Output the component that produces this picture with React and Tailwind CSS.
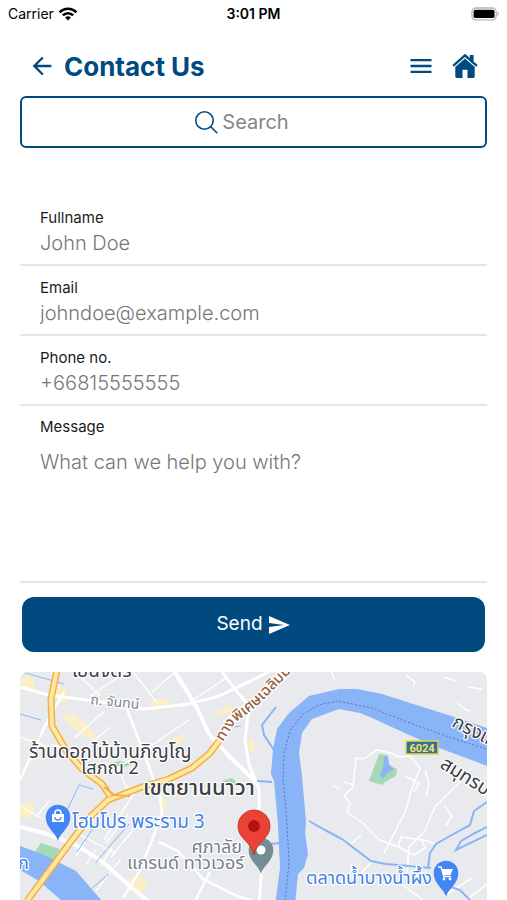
import { MdArrowBack, MdMenu, MdSend } from 'react-icons/md'

const fields = [
  { id: 'fullname', label: 'Fullname', type: 'text', placeholder: 'John Doe' },
  { id: 'email', label: 'Email', type: 'email', placeholder: 'johndoe@example.com' },
  { id: 'phone', label: 'Phone no.', type: 'tel', placeholder: '+66815555555' },
]

function StatusBar() {
  return (
    <div className="grid h-7 grid-cols-3 items-center px-2 text-black">
      <div className="flex items-center gap-1 text-sm">
        <span>Carrier</span>
        <svg className="h-4 w-5" viewBox="0 0 20 16" fill="none" stroke="currentColor" strokeWidth="2.6">
          <path d="M1.6 6.2a12 12 0 0 1 16.8 0" />
          <path d="M4.8 9.4a7.4 7.4 0 0 1 10.4 0" />
          <path d="M10 14.6l-2.9-3a4.2 4.2 0 0 1 5.8 0z" fill="currentColor" stroke="none" />
        </svg>
      </div>
      <span className="text-center text-sm font-semibold">3:01 PM</span>
      <svg className="h-4 w-7 justify-self-end" viewBox="0 1 30 14">
        <rect x="1" y="1.600" width="26" height="12.600" rx="4" fill="#fff" stroke="#b5b5b5" strokeWidth="1.4" />
        <rect x="2.800" y="3.400" width="22.400" height="9" rx="2" fill="#000" />
        <path d="M28.400 5.600c2 .7 2 3.900 0 4.600z" fill="#b5b5b5" />
      </svg>
    </div>
  )
}

function Header() {
  return (
    <header className="flex h-16 items-center px-7 text-[#004a80]">
      <button type="button" aria-label="Back">
        <MdArrowBack className="size-7" />
      </button>
      <h1 className="ml-2 grow text-[26px] font-bold">Contact Us</h1>
      <button type="button" aria-label="Menu">
        <MdMenu className="size-7" />
      </button>
      <button type="button" aria-label="Home" className="ml-4">
        <svg className="size-7" viewBox="0 0 28 28" fill="currentColor">
          <path d="M14 1.800 1.400 13.100l1.500 1.700L14 4.900l11.100 9.900 1.500-1.700-4-3.600V3.100h-3.800v3z" />
          <path d="M14 6.500 4.300 15.100v9.500c0 .9.5 1.400 1.400 1.400h5.800v-8.200h5V26h5.800c.9 0 1.400-.5 1.400-1.400v-9.500z" />
        </svg>
      </button>
    </header>
  )
}

function Pin({ x, y, color, children }) {
  return (
    <g transform={`translate(${x} ${y})`}>
      <path d="M0 24C-1.500 16-12.300 11.500-12.300 0a12.300 12.300 0 0 1 24.600 0C12.300 11.500 1.500 16 0 24z" fill={color} />
      {children}
    </g>
  )
}

function Map() {
  return (
    <svg
      className="block h-[229px] w-full rounded-t-lg bg-[#e8eaed]"
      viewBox="0 0 467 229"
      preserveAspectRatio="xMidYMid slice"
      role="img"
      aria-label="Map"
    >
      {/* blocks */}
      <g fill="#fbefc5">
        <path d="M0 9l9-9 6 12-2 8-10-6z" />
        <path d="M37 12l9 5 3 12-10 1-4-10z" />
        <path d="M41 43l11-2 14 10 14 18-13-4-14-9z" />
        <path d="M131 29l18-4-2 9-15 6z" />
        <path d="M193 42l17-9 4 5-17 7z" />
        <path d="M149 68l16-6-2 8-12 5z" />
        <path d="M228 67l5-1 2 13-5 1z" />
        <path d="M0 133l13-3 2 10-8 7-7-3z" />
        <path d="M106 207l16-3 6 9-8 9-11-2z" />
        <path d="M139 125l6 0 1 15-5-2z" />
      </g>
      <g fill="#a5d8b5">
        <path d="M15 180l6-9 19 6-7 13z" />
        <path d="M202 109l10-3 8 8h-14z" />
        <path d="M87 93l12-4 14 3-15 5z" />
        <path d="M359 82l8 1 2 11 8 3-1 7-11 6-3 3-13-4z" />
      </g>
      <path d="M364 85l4-1 1 8 5 5-7 4-4 6-3-4 3-7z" fill="#8ab4f8" />

      {/* small streets */}
      <g fill="none" stroke="#fff" strokeWidth="1.4">
        <path d="M0 108l24-52 12-22 8-14" strokeWidth="2.5" />
        <path d="M0 15l28 8 54 7 42 7 45-5 30-8 50-24" strokeWidth="3" />
        <path d="M107 37l16 42 14 38" strokeWidth="2.5" />
        <path d="M155 0l21 34 13 28 22 24 27 26" strokeWidth="4" />
        <path d="M202 0l13 17 14 17-4 34 4 25 10 24 1 50 2 26-4 53" strokeWidth="3" />
        <path d="M0 155l24 6 34 13 25 16 22 20 24 20" strokeWidth="4" />
        <path d="M54 66l31-27M120 81l49-33M132 20l23-20M60 4l20 20M70 24l33-22M113 0l24 31M173 28l33-22" />
        <path d="M118 82l-20 14 9 20M32 73l30 7M90 55l-34 30M0 65l26 9" />
        <path d="M139 118l3 23-11 30-12 29-16 26" strokeWidth="2.5" />
        <path d="M139 170l19 9 25 28 34 17 16 5M190 200l-15 29" strokeWidth="2.5" />
        <path d="M65 170l-9 14M76 177l-10 16M60 163l35 18M92 176l-12 18M108 143l-22 28M119 151l-28 34" />
        <path d="M16 145l13-16M3 136l18 10M115 120l-31 48M100 188l-24 31" />
      </g>
      <g fill="none" stroke="#fff" strokeWidth="1.5" strokeLinejoin="round">
        <path d="M333 115l3-29 8 1 13-9 14 3 8 4 11-1 10 12-9 23-5 19-12 24-10 19" />
        <path d="M333 115l-9 9 6 7-3 9 17 12 15 16 20 7 15 8 11-7-3-8-21-3-3 11" />
        <path d="M452 96l-20 22-17 17-11 25-15 15-2 25-9 10" />
        <path d="M405 99l4 13-3 13M424 134l8 10-6 10M341 163l-10 9M353 188l-14 16M401 167l14 5" />
        <path d="M386 3l9 7-2 5M437 31l9 7 5 1M424 5l11 4M311 0l4 8M462 17l-14-2" />
        <path d="M334 113l-10-3M385 104l14 7-5 9M313 113l7 5M379 210l24 18M424 224l28-18M467 212l-22 17" />
      </g>

      {/* water */}
      <g fill="#8ab4f8">
        <path d="M254 109l-3-7 2-25 4-20 12-16 20-17 30-7 18 0 25 5 69 22 36 12v38l-10-4-38-14-32-14-35-16-12-5-21-4-27 10-10 14-3 20 3 23 4 45-1 12 3 21-4 14-6 6-3 31h-20l5-37-2-43z" />
        <path d="M0 174l22 8 34 17 26 30H42L19 209 0 198z" />
      </g>
      <g fill="none" stroke="#8ab4f8" strokeWidth="1.5">
        <path d="M256 35l-14 18 2 10 12 18M237 109l15 1M247 172l16-1M289 149l16 9 17 9 17 13 12 9 15 3 45 4" strokeWidth="2" />
        <path d="M408 195l2-14 6-9 14-8 20-11 4-14 13-9M467 155l-12 6-14 8-5 9 31-15M428 214l12 4 10 10" strokeWidth="2" />
        <path d="M2 0l42 12M0 42l21 6M43 147l16-34 14 4M57 180l17-25M76 190l33-38M71 217l18-15M200 57l21-3" strokeWidth="1" />
      </g>
      <path
        d="M265 229l4-38-2-40-4-45 1-25 6-22 12-16 16-10 20-4 34 7 35 14 45 16 34 11"
        fill="none"
        stroke="#5579b5"
        strokeWidth="1"
        strokeDasharray="2 2"
      />

      {/* highways */}
      <g fill="none" strokeLinejoin="round">
        <path d="M199 67l13-20 20-16 14-11 23-22" stroke="#fff" strokeWidth="8" />
        <g stroke="#f4b142" strokeWidth="7">
          <path d="M37-2l-6 29 1 27 14 24 16 19 20 15 8 12" />
          <path d="M199 69l-10 13-17 14-23 11-27 8-34 13-19 18-20 26-42 57" />
        </g>
        <g stroke="#fde9a5" strokeWidth="4">
          <path d="M37-2l-6 29 1 27 14 24 16 19 20 15 8 12" />
          <path d="M199 69l-10 13-17 14-23 11-27 8-34 13-19 18-20 26-42 57" />
        </g>
        <path d="M84 115l10 8 16 1" stroke="#f4b142" strokeWidth="2" />
      </g>

      {/* labels */}
      <g
        fontFamily="'Noto Sans Thai', 'Noto Sans', sans-serif"
        stroke="#fff"
        strokeWidth="2.5"
        strokeLinejoin="round"
        paintOrder="stroke"
      >
        <g fill="#3c4043" fontSize="19">
          <text x="52" y="5">เย็นจิตร</text>
          <text x="9" y="86">ร้านดอกไม้บ้านภิญโญ</text>
          <text x="61" y="102" fontSize="18">โสภณ 2</text>
          <text x="123" y="123" fontSize="22" fontWeight="500">เขตยานนาวา</text>
          <text transform="translate(431 54) rotate(27)">กรุงเทพ</text>
          <text transform="translate(419 95) rotate(32)">สมุทรปราการ</text>
        </g>
        <text fill="#80868b" fontSize="14" transform="translate(70 32) rotate(6)">ถ. จันทน์</text>
        <path id="expressway" d="M203 70L215 51L236 35L274-3" fill="none" stroke="none" />
        <text fill="#936039" fontSize="15" fontWeight="500">
          <textPath href="#expressway">ทางพิเศษเฉลิมมหานคร</textPath>
        </text>
        <g fill="#3f7fe8" fontSize="18">
          <text x="-2" y="197">ก</text>
          <text x="52" y="156" fontSize="19">โฮมโปร พระราม 3</text>
          <text x="286" y="212">ตลาดน้ำบางน้ำผึ้ง</text>
        </g>
        <g fill="#758087" fontSize="18">
          <text x="222" y="181" textAnchor="end">ศุภาลัย</text>
          <text x="224" y="197" textAnchor="end">แกรนด์ ทาวเวอร์</text>
        </g>
      </g>

      <rect x="386" y="69" width="32" height="13" fill="#3270a4" stroke="#e8d735" strokeWidth="1.5" />
      <text x="402" y="80" textAnchor="middle" fontFamily="Roboto, sans-serif" fontSize="11" fontWeight="700" fill="#f5e65a">
        6024
      </text>

      <Pin x={38} y={145} color="#4285f4">
        <path d="M-6-3H6v8H-6z" fill="#fff" />
        <path d="M-3-3v-1a3 3 0 0 1 6 0v1" fill="none" stroke="#fff" strokeWidth="1.6" />
        <path d="M-3 0a3 3 0 0 0 6 0" fill="none" stroke="#4285f4" strokeWidth="1.3" />
      </Pin>
      <Pin x={426} y={201} color="#4285f4">
        <path d="M-4-4H7L4.500 2H-3z" fill="#fff" />
        <path d="M-8-6h3l3 9.500h7" fill="none" stroke="#fff" strokeWidth="1.4" />
        <circle cx="-2" cy="6" r="1.4" fill="#fff" />
        <circle cx="4" cy="6" r="1.4" fill="#fff" />
      </Pin>
      <Pin x={241} y={178} color="#748c94">
        <circle r="4.500" fill="#fff" />
      </Pin>
      <g>
        <path
          d="M234 183c-2-13-16-16-16-29a16 16 0 0 1 32 0c0 13-14 16-16 29z"
          fill="#ea4335"
          stroke="#c5352b"
          strokeWidth="1"
        />
        <circle cx="234" cy="154" r="6" fill="#b31412" />
      </g>
    </svg>
  )
}

export default function App() {
  return (
    <div className="min-h-screen overflow-hidden bg-white font-['Inter',sans-serif]">
      <StatusBar />
      <div className="h-1.5" />
      <Header />
      <main className="px-5">
        <label className="-mt-0.5 flex h-[52px] items-center justify-center gap-1 rounded-md border-2 border-[#004a80] pr-6">
          <svg className="size-6 text-[#004a80]" viewBox="0 0 24 24" fill="none" stroke="currentColor" strokeWidth="1.6">
            <circle cx="10.500" cy="10.500" r="8.700" />
            <path d="M16.800 16.800l6 6" strokeLinecap="round" />
          </svg>
          <input
            type="search"
            aria-label="Search"
            placeholder="Search"
            className="field-sizing-content text-xl outline-none placeholder:text-[#868686]"
          />
        </label>

        <form className="mt-12" onSubmit={(e) => e.preventDefault()}>
          {fields.map((field) => (
            <div key={field.id} className="flex h-[70px] flex-col justify-end border-b-2 border-[#e6e6e6] px-5 pb-1.5">
              <label htmlFor={field.id} className="text-[15px] leading-5 text-[#1c1c1c]">
                {field.label}
              </label>
              <input
                id={field.id}
                type={field.type}
                placeholder={field.placeholder}
                className="h-[30px] text-xl font-light outline-none placeholder:text-[#777777]"
              />
            </div>
          ))}
          <div className="flex h-[177px] flex-col border-b-2 border-[#e6e6e6] px-5 pt-[11px]">
            <label htmlFor="message" className="text-[15px] leading-5 text-[#1c1c1c]">
              Message
            </label>
            <textarea
              id="message"
              placeholder="What can we help you with?"
              className="mt-[11px] grow resize-none text-xl font-light outline-none placeholder:text-[#777777]"
            />
          </div>
          <div className="px-0.5 py-3.5">
            <button
              type="submit"
              className="flex h-[55px] w-full items-center justify-center gap-1 rounded-xl bg-[#004a80] text-[19px] text-white"
            >
              Send
              <MdSend className="size-6" />
            </button>
          </div>
        </form>

        <div className="mt-1.5">
          <Map />
        </div>
      </main>
    </div>
  )
}
